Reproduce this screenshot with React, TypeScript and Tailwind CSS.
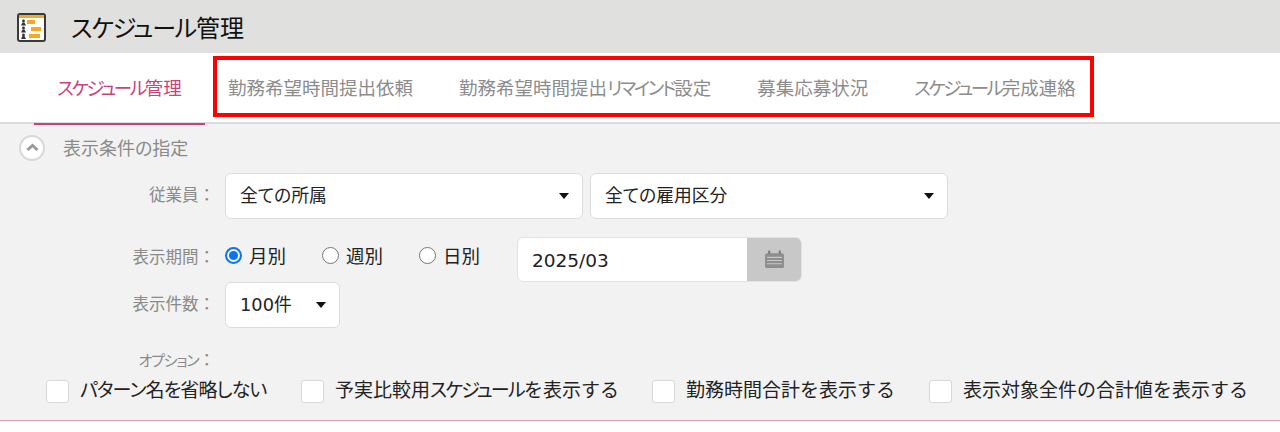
import type { ReactNode } from "react";

const font = { fontFamily: '"DejaVu Sans", "Noto Sans CJK JP", sans-serif' };

function Caret() {
  return <span className="h-0 w-0 border-x-[5.5px] border-t-[6px] border-x-transparent border-t-[#111]" />;
}

function SelectBox({ label, className }: { label: string; className: string }) {
  return (
    <div className={`flex h-[46px] items-center justify-between rounded-md border border-[#dcdcdc] bg-white pl-[14px] pr-[13px] text-[17.8px] text-[#222] [font-feature-settings:'palt'] ${className}`}>
      <span className="pt-[1px]">{label}</span>
      <Caret />
    </div>
  );
}

function Radio({ label, checked, className }: { label: string; checked?: boolean; className: string }) {
  return (
    <label className={`flex items-center gap-[7px] text-[18.5px] text-[#222] ${className}`}>
      {checked ? (
        <span className="mb-[3px] flex h-[17px] w-[17px] items-center justify-center rounded-full border-2 border-[#0a74f0]">
          <span className="h-[9px] w-[9px] rounded-full bg-[#0a74f0]" />
        </span>
      ) : (
        <span className="mb-[3px] h-[17px] w-[17px] rounded-full border border-[#767676] bg-white" />
      )}
      {label}
    </label>
  );
}

function Check({ children, className }: { children: ReactNode; className: string }) {
  return (
    <label className={`flex items-center gap-[11px] text-[19px] text-[#222] ${className}`}>
      <span className="h-[23px] w-[23px] rounded-[3px] border border-[#d8d8d8] bg-white" />
      <span className="mb-[2px]">{children}</span>
    </label>
  );
}

function Label({ children, className = "" }: { children: ReactNode; className?: string }) {
  return <div className={`w-[215px] shrink-0 text-right text-[16.5px] text-[#8a8a88] ${className}`}>{children}</div>;
}

function Kana({ children }: { children: string }) {
  return <span className="tracking-[-2.4px]">{children}</span>;
}

export default function App() {
  return (
    <div style={font} className="relative h-[432px] w-[1280px] overflow-hidden bg-white">
      <header className="flex h-[53px] items-center bg-[#e0e0de] pl-[17px]">
        <svg width="29" height="29" viewBox="0 0 29 29" className="mt-[1px]">
          <rect x="1" y="1" width="27" height="27" rx="2" fill="#fff" stroke="#3a3a3a" strokeWidth="2" />
          <rect x="2" y="2" width="25" height="3" fill="#f7a823" />
          <rect x="10" y="7" width="8" height="4" fill="#f7a823" />
          <rect x="14" y="14" width="10" height="4" fill="#f7a823" />
          <rect x="12" y="21" width="11" height="4" fill="#f7a823" />
          <circle cx="6.5" cy="8" r="1.4" fill="#333" />
          <circle cx="6.5" cy="15" r="1.4" fill="#333" />
          <circle cx="6.5" cy="22" r="1.4" fill="#333" />
          <path d="M4 12.5l1.5-3h2l1.5 3zM4 19.5l1.5-3h2l1.5 3zM4 26l1.5-3h2l1.5 3z" fill="#333" />
        </svg>
        <h1 className="ml-[25px] mt-[5px] text-[24px] font-normal text-[#111] [font-feature-settings:'palt']">
          <span className="tracking-[-1.2px]">スケジュール</span>管理
        </h1>
      </header>

      <nav className="flex h-[71px] items-center border-b-2 border-[#dcdcdc] pt-[2px] text-[18.5px] text-[#8c8c8c] [font-feature-settings:'palt']">
        <div className="relative ml-[34px] flex h-[69px] w-[171px] items-center justify-center text-[#c8447c]">
          <span>
            <Kana>スケジュール</Kana>管理
          </span>
          <span className="absolute bottom-[-2px] left-0 h-[2px] w-full bg-[#c4437a]" />
        </div>
        <span className="ml-[23px]">勤務希望時間提出依頼</span>
        <span className="ml-[46px]">
          勤務希望時間提出<Kana>リマインド</Kana>設定
        </span>
        <span className="ml-[46px]">募集応募状況</span>
        <span className="ml-[46px]">
          <Kana>スケジュール</Kana>完成連絡
        </span>
      </nav>

      {/* red highlight from the source document */}
      <div className="absolute left-[213px] top-[56px] h-[61px] w-[881px] border-[4px] border-[#ff0000]" />

      <main className="h-[297px] border-b border-[#e29ab8] bg-[#f2f2f2]">
        <div className="flex h-[49px] items-center pl-[19px] pb-[2px]">
          <span className="flex h-[26px] w-[26px] items-center justify-center rounded-full border-2 border-[#d8d8d8] bg-white">
            <svg width="13" height="9" viewBox="0 0 13 9">
              <path d="M1.5 7L6.5 2.5L11.5 7" fill="none" stroke="#999" strokeWidth="3" />
            </svg>
          </span>
          <span className="ml-[18px] pt-[2px] text-[18px] text-[#8a8a88] [font-feature-settings:'palt']">表示条件の指定</span>
        </div>

        <div className="flex h-[46px] items-center">
          <Label className="pt-[1px]">従業員：</Label>
          <SelectBox label="全ての所属" className="ml-[10px] w-[358px]" />
          <SelectBox label="全ての雇用区分" className="ml-[7px] w-[358px]" />
        </div>

        <div className="mt-[18px] flex h-[45px] items-start">
          <Label className="pt-[9px]">表示期間：</Label>
          <div className="flex h-[40px] items-center">
            <Radio checked label="月別" className="ml-[10px] w-[97px]" />
            <Radio label="週別" className="w-[97px]" />
            <Radio label="日別" className="w-[98px]" />
          </div>
          <div className="flex h-[45px] w-[285px] overflow-hidden rounded-md border border-[#e2e2e2] bg-white">
            <span className="flex-1 pl-[14px] text-[18.5px] leading-[45px] text-[#222]">2025/03</span>
            <span className="flex w-[54px] items-center justify-center bg-[#c8c8c9]">
              <svg width="21" height="19" viewBox="0 0 20 18">
                <path d="M1 5a2 2 0 0 1 2-2h14a2 2 0 0 1 2 2v11a1 1 0 0 1-1 1H2a1 1 0 0 1-1-1z" fill="#8e8e8e" />
                <rect x="4" y="0.5" width="2" height="3" fill="#777" />
                <rect x="14" y="0.5" width="2" height="3" fill="#777" />
                <path d="M3 7h14M3 10h14M3 13h14" stroke="#c8c8c9" strokeWidth="1" />
              </svg>
            </span>
          </div>
        </div>

        <div className="flex h-[46px] items-center">
          <Label className="pt-[1px]">表示件数：</Label>
          <SelectBox label="100件" className="ml-[10px] w-[115px]" />
        </div>

        <div className="mt-[21px] flex h-[23px] items-center">
          <Label className="pt-[1px]">
            <span className="text-[15px] tracking-[-1.2px] [font-feature-settings:'palt']">オプション</span>：
          </Label>
        </div>

        <div className="mt-[4px] flex items-center">
          <Check className="ml-[46px] w-[255px]">
            <span className="tracking-[-0.9px] [font-feature-settings:'palt']">パターン名を省略しない</span>
          </Check>
          <Check className="w-[351px]">
            予実比較用<span className="tracking-[-1.8px] [font-feature-settings:'palt']">スケジュール</span>を表示する
          </Check>
          <Check className="w-[277px]">勤務時間合計を表示する</Check>
          <Check className="">表示対象全件の合計値を表示する</Check>
        </div>
      </main>
    </div>
  );
}
